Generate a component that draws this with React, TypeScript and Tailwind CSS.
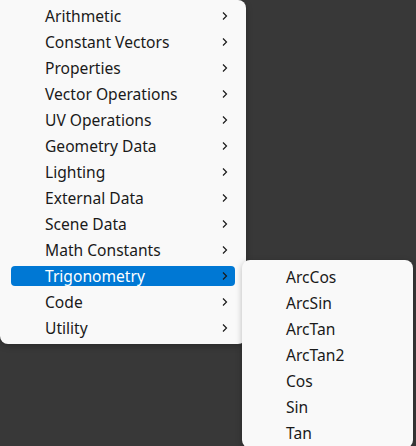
import React from 'react';

const mainItems = [
  'Arithmetic',
  'Constant Vectors',
  'Properties',
  'Vector Operations',
  'UV Operations',
  'Geometry Data',
  'Lighting',
  'External Data',
  'Scene Data',
  'Math Constants',
  'Trigonometry',
  'Code',
  'Utility',
];

const subItems = ['ArcCos', 'ArcSin', 'ArcTan', 'ArcTan2', 'Cos', 'Sin', 'Tan'];

const Chevron: React.FC = () => (
  <svg width="8" height="10" viewBox="0 0 8 10" fill="none" className="shrink-0">
    <path d="M2 1.5 L5.5 5 L2 8.5" stroke="#1a1a1a" strokeWidth="1.2" />
  </svg>
);

const App: React.FC = () => {
  return (
    <div
      className="relative w-[416px] h-[446px] overflow-hidden bg-[#383838]"
      style={{ fontFamily: '"Noto Sans", "Open Sans", sans-serif' }}
    >
      {/* Main menu */}
      <div className="w-[246px] h-[344px] bg-[#f9f9f9] rounded-tr-lg rounded-b-lg pt-[3px] shadow-[0_2px_6px_rgba(0,0,0,0.25)]">
        {mainItems.map((item) => {
          const active = item === 'Trigonometry';
          return (
            <div key={item} className="h-[26px] px-[11px] py-[3px]">
              <div
                className={`h-[20px] flex items-center rounded-[4px] pl-[34px] pr-[6px] ${
                  active ? 'bg-[#0078d4] text-white' : 'text-[#1a1a1a]'
                }`}
              >
                <span className="flex-1 text-[15.6px] leading-[20px]">{item}</span>
                <Chevron />
              </div>
            </div>
          );
        })}
      </div>

      {/* Submenu */}
      <div className="absolute left-[242px] top-[260px] w-[171px] h-[188px] bg-[#f9f9f9] rounded-lg pt-[4px] shadow-[0_2px_6px_rgba(0,0,0,0.25)]">
        {subItems.map((item) => (
          <div key={item} className="h-[26px] pl-[44px] text-[15.6px] leading-[26px] text-[#1a1a1a]">
            {item}
          </div>
        ))}
      </div>
    </div>
  );
};

export default App;
